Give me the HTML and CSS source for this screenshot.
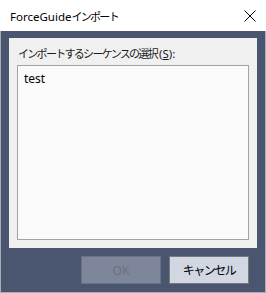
FILE: index.html
```html
<!DOCTYPE html>
<html lang="ja">
<head>
<meta charset="utf-8">
<link rel="stylesheet" href="styles.css">
</head>
<body>
<div class="window">
  <div class="titlebar">
    <span class="title">ForceGuide<span class="ja">インポート</span></span>
    <svg class="close" width="12" height="12" viewBox="0 0 12 12"><path d="M0.5 0.5 L11.5 11.5 M11.5 0.5 L0.5 11.5" stroke="#000" stroke-width="1" fill="none"/></svg>
  </div>
  <div class="client">
    <div class="panel">
      <div class="label"><span class="ja lab">インポートするシーケンスの選択</span>(<u>S</u>):</div>
      <div class="listbox">
        <div class="item">test</div>
      </div>
    </div>
    <div class="buttons">
      <button class="btn disabled" disabled>OK</button>
      <button class="btn"><span class="ja">キャンセル</span></button>
    </div>
  </div>
</div>
</body>
</html>
```
FILE: styles.css
```css
html, body {
  margin: 0;
  padding: 0;
  width: 266px;
  height: 293px;
  overflow: hidden;
  font-family: "Noto Sans", "Noto Sans CJK JP", sans-serif;
  font-size: 11.5px;
}
.ja {
  font-family: "Noto Sans CJK JP", sans-serif;
  font-size: 11px;
  letter-spacing: -1.7px;
}
.ja.lab {
  margin-right: 2px;
}
.window {
  width: 266px;
  height: 293px;
  display: flex;
  flex-direction: column;
}
.titlebar {
  height: 31px;
  background: #ffffff;
  display: flex;
  align-items: center;
  justify-content: space-between;
  padding: 0 10px 0 10px;
  box-sizing: border-box;
  flex: none;
}
.title {
  color: #000;
}
.client {
  flex: 1;
  background: #4a5570;
  border: 1px solid #a9adb5;
  border-top: none;
  padding: 7px 8px 8px 8px;
  display: flex;
  flex-direction: column;
  gap: 8px;
}
.panel {
  height: 210px;
  background: #f0f0f0;
  padding: 0 8px 8px 8px;
  box-sizing: border-box;
  display: flex;
  flex-direction: column;
}
.label {
  height: 27px;
  line-height: 31px;
  color: #1a1a1a;
  padding-left: 1px;
}
.label u {
  text-decoration: underline;
  text-underline-offset: 1px;
}
.listbox {
  flex: 1;
  background: #fafafa;
  border: 1px solid #a3a3a3;
  padding: 4px 5px;
}
.item {
  color: #000;
  font-size: 12px;
  line-height: 17px;
  padding-left: 1px;
}
.buttons {
  display: flex;
  justify-content: flex-end;
  gap: 8px;
  padding-right: 8px;
}
.btn {
  width: 80px;
  height: 28px;
  margin: 0;
  box-sizing: border-box;
  border: 1px solid #7a7a7a;
  background: #d1d7e3;
  color: #000;
  font-family: "Noto Sans", "Noto Sans CJK JP", sans-serif;
  font-size: 12px;
  padding: 0;
}
.btn .ja {
  font-size: 12px;
  letter-spacing: -1.5px;
}
.btn.disabled {
  background: #7d869b;
  border-color: #6a7287;
  color: #6b7182;
}
```
